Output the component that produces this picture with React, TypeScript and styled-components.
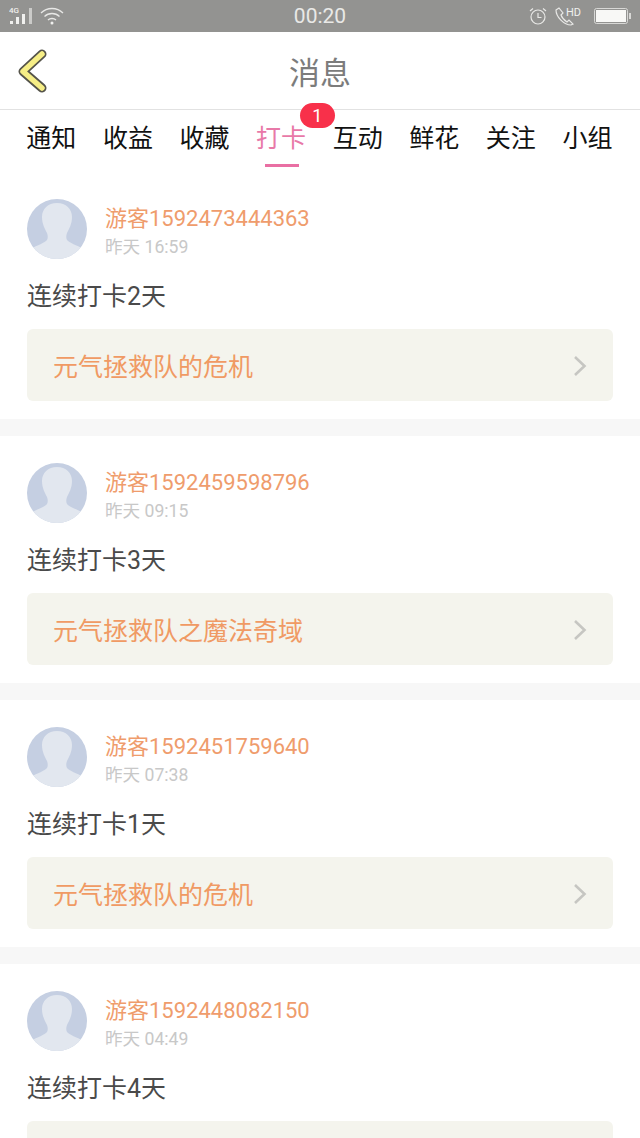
import styled, { createGlobalStyle } from "styled-components";

const GlobalStyle = createGlobalStyle`
  html, body {
    margin: 0;
    padding: 0;
    background: #fff;
    overflow: hidden;
    font-family: Roboto, "Noto Sans CJK SC", sans-serif;
  }
`;

const Page = styled.div`
  width: 640px;
  height: 1138px;
  overflow: hidden;
  background: #fff;
`;

const StatusBar = styled.div`
  height: 32px;
  background: #939391;
  display: grid;
  grid-template-columns: 1fr auto 1fr;
  align-items: center;
  padding: 0 9px;
  color: #f0f0ee;
`;

const StatusSide = styled.div<{ $right?: boolean }>`
  display: flex;
  align-items: center;
  justify-content: ${(p) => (p.$right ? "flex-end" : "flex-start")};
  gap: ${(p) => (p.$right ? "8px" : "7px")};
`;

const Clock = styled.div`
  font-size: 21px;
  color: #e9e9e7;
`;

const BatteryWrap = styled.div`
  margin-left: 5px;
  line-height: 0;
`;

const NavBar = styled.div`
  height: 77px;
  display: flex;
  align-items: center;
  justify-content: center;
  position: relative;
  border-bottom: 1px solid #e2e2e2;
`;

const BackButton = styled.div`
  position: absolute;
  left: 17px;
  top: 17px;
  line-height: 0;
`;

const Title = styled.div`
  font-size: 31px;
  color: #7c7c7c;
  font-weight: 400;
`;

const Tabs = styled.div`
  height: 54px;
  display: grid;
  grid-template-columns: repeat(8, 76.6px);
  padding-left: 13px;
`;

const Tab = styled.div<{ $active?: boolean }>`
  position: relative;
  width: 76.6px;
  text-align: center;
  font-size: 25px;
  line-height: 57px;
  color: ${(p) => (p.$active ? "#e879a8" : "#111")};
`;

const Underline = styled.div`
  position: absolute;
  left: 22px;
  bottom: 0;
  width: 34px;
  height: 3px;
  background: #e96fa3;
`;

const Badge = styled.div`
  position: absolute;
  left: 57px;
  top: -7px;
  width: 35px;
  height: 25px;
  border-radius: 13px;
  background: #f8304a;
  color: #fff;
  font-size: 18px;
  line-height: 25px;
  text-align: center;
`;

const Feed = styled.div`
  padding-top: 35px;
`;

const Item = styled.div`
  padding: 0 27px 18px;
  margin-bottom: 44px;
  position: relative;

  &::after {
    content: "";
    position: absolute;
    left: 0;
    right: 0;
    bottom: -17px;
    height: 17px;
    background: #f7f7f7;
  }
`;

const UserRow = styled.div`
  display: flex;
  gap: 18px;
  height: 60px;
`;

const UserInfo = styled.div`
  display: flex;
  flex-direction: column;
  padding-top: 6px;
`;

const UserName = styled.div`
  font-size: 22px;
  line-height: 28px;
  color: #ef9c6c;
`;

const Time = styled.div`
  font-size: 17.6px;
  line-height: 28px;
  color: #c8c8c8;
`;

const Message = styled.div`
  font-size: 25px;
  line-height: 34px;
  color: #4a4a4a;
  margin: 21px 0 15px;
`;

const LinkCard = styled.div`
  height: 72px;
  border-radius: 6px;
  background: #f4f4ed;
  display: flex;
  align-items: center;
  justify-content: space-between;
  padding: 0 26px;
`;

const LinkText = styled.div`
  font-size: 25px;
  color: #f09a64;
`;

const items = [
  { name: "游客1592473444363", time: "昨天 16:59", msg: "连续打卡2天", link: "元气拯救队的危机" },
  { name: "游客1592459598796", time: "昨天 09:15", msg: "连续打卡3天", link: "元气拯救队之魔法奇域" },
  { name: "游客1592451759640", time: "昨天 07:38", msg: "连续打卡1天", link: "元气拯救队的危机" },
  { name: "游客1592448082150", time: "昨天 04:49", msg: "连续打卡4天", link: "元气拯救队的危机" },
];

const tabs = ["通知", "收益", "收藏", "打卡", "互动", "鲜花", "关注", "小组"];

function Avatar() {
  return (
    <svg width="60" height="60" viewBox="0 0 60 60">
      <defs>
        <clipPath id="avatar-clip">
          <circle cx="30" cy="30" r="30" />
        </clipPath>
      </defs>
      <circle cx="30" cy="30" r="30" fill="#c5cfe2" />
      <g clipPath="url(#avatar-clip)" fill="#e2e7ef">
        <path d="M30 4c-9 0-15 6-15 14 0 7 3 12 5 16 1 3 1 5 0 7-2 3-10 5-16 9l-2 12h56l-2-12c-6-4-14-6-16-9-1-2-1-4 0-7 2-4 5-9 5-16 0-8-6-14-15-14z" />
      </g>
    </svg>
  );
}

function Chevron() {
  return (
    <svg width="14" height="24" viewBox="0 0 14 24">
      <path d="M2 4l9.500 9L2 22" fill="none" stroke="#c6c6c2" strokeWidth="2.600" />
    </svg>
  );
}

function BackIcon() {
  return (
    <svg width="30" height="44" viewBox="0 0 30 44">
      <path
        d="M25 5L6 22.500 25 39"
        fill="none"
        stroke="#55544a"
        strokeWidth="9"
        strokeLinecap="round"
        strokeLinejoin="round"
      />
      <path
        d="M25 5L6 22.500 25 39"
        fill="none"
        stroke="#f6ee86"
        strokeWidth="5.500"
        strokeLinecap="round"
        strokeLinejoin="round"
      />
    </svg>
  );
}

function SignalIcon() {
  return (
    <svg width="24" height="20" viewBox="0 0 24 20" fill="#f0f0ee">
      <text x="0" y="7" fontSize="8" fontFamily="Roboto, sans-serif" fontWeight="500">4G</text>
      <rect x="1" y="15" width="3" height="3" />
      <rect x="7" y="11" width="3" height="7" />
      <rect x="13" y="8" width="3" height="10" />
      <rect x="20" y="2" width="3" height="16" opacity="0.6" />
    </svg>
  );
}

function WifiIcon() {
  return (
    <svg width="24" height="20" viewBox="0 0 24 20" fill="none" stroke="#e8e8e6" strokeWidth="1.300">
      <path d="M1 7c6-6 16-6 22 0" />
      <path d="M4.500 10.500c4-4 11-4 15 0" />
      <path d="M8 14c2-2 6-2 8 0" />
      <circle cx="12" cy="17" r="1.500" fill="#f0f0ee" stroke="none" />
    </svg>
  );
}

function AlarmIcon() {
  return (
    <svg width="18" height="18" viewBox="0 0 18 18" fill="none" stroke="#e8e8e6" strokeWidth="1.200">
      <circle cx="9" cy="10" r="7" />
      <path d="M9 6v4.500h3.500M1 4l3-2.500M17 4l-3-2.500" />
    </svg>
  );
}

function CallHdIcon() {
  return (
    <svg width="26" height="20" viewBox="0 0 26 20" fill="none" stroke="#e8e8e6" strokeWidth="1.200">
      <path d="M1 4l3-2 4 5-2 2c1 3 3 5 6 7l2-2 4 4-2 1c-7 0-15-8-15-15z" />
      <text x="11" y="10" fontSize="11" fontFamily="Roboto, sans-serif" fill="#f0f0ee" stroke="none">HD</text>
    </svg>
  );
}

function BatteryIcon() {
  return (
    <svg width="37" height="18" viewBox="0 0 37 18">
      <rect x="0.500" y="1.500" width="33" height="15" rx="2" fill="none" stroke="#d8d8d6" />
      <rect x="2" y="3" width="30" height="12" fill="#f8f8f6" />
      <rect x="35" y="6" width="2" height="6" fill="#d8d8d6" />
    </svg>
  );
}

export default function App() {
  return (
    <Page>
      <GlobalStyle />
      <StatusBar>
        <StatusSide>
          <SignalIcon />
          <WifiIcon />
        </StatusSide>
        <Clock>00:20</Clock>
        <StatusSide $right>
          <AlarmIcon />
          <CallHdIcon />
          <BatteryWrap>
            <BatteryIcon />
          </BatteryWrap>
        </StatusSide>
      </StatusBar>
      <NavBar>
        <BackButton>
          <BackIcon />
        </BackButton>
        <Title>消息</Title>
      </NavBar>
      <Tabs>
        {tabs.map((t) => (
          <Tab key={t} $active={t === "打卡"}>
            {t}
            {t === "打卡" && (
              <>
                <Badge>1</Badge>
                <Underline />
              </>
            )}
          </Tab>
        ))}
      </Tabs>
      <Feed>
        {items.map((it) => (
          <Item key={it.name}>
            <UserRow>
              <Avatar />
              <UserInfo>
                <UserName>{it.name}</UserName>
                <Time>{it.time}</Time>
              </UserInfo>
            </UserRow>
            <Message>{it.msg}</Message>
            <LinkCard>
              <LinkText>{it.link}</LinkText>
              <Chevron />
            </LinkCard>
          </Item>
        ))}
      </Feed>
    </Page>
  );
}
